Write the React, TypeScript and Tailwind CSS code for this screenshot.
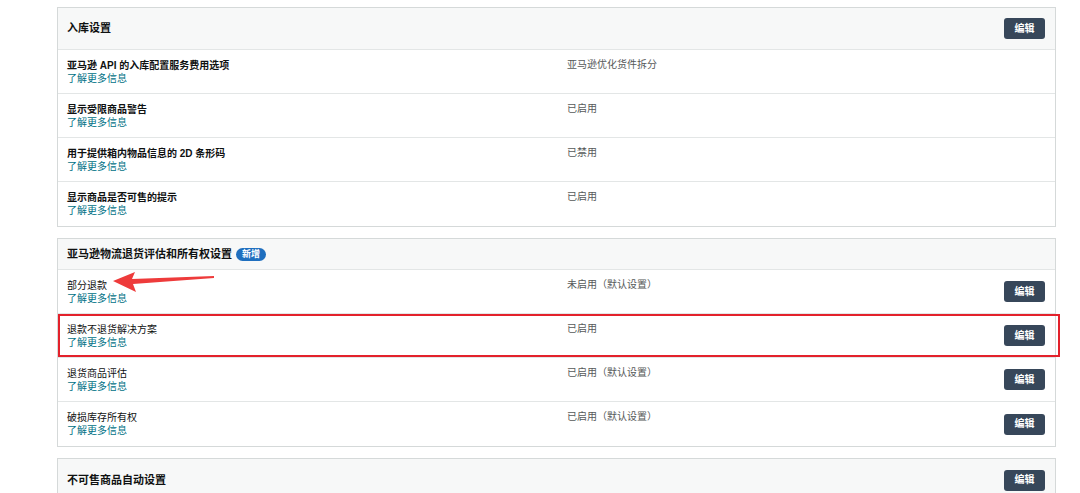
import React from "react";

const font = { fontFamily: '"Liberation Sans", "Noto Sans CJK SC", sans-serif' };

function EditBtn() {
  return (
    <button className="h-[21px] w-[41px] rounded-[3px] bg-[#37475a] text-[10px] font-bold text-white leading-none">
      编辑
    </button>
  );
}

type Row = { label: string; value: string; bold?: boolean; edit?: boolean; highlight?: boolean; arrow?: boolean };

function SettingRow({ r, last }: { r: Row; last: boolean }) {
  return (
    <div className={`relative flex h-[44px] items-center pl-[9px] pr-[10px] ${last ? "h-[43px]" : "border-b border-[#e3e6e6]"}`}>
      <div className="w-[500px]">
        <div className={`text-[10px] leading-[13px] text-[#0f1111] ${r.bold ? "font-bold" : ""}`}>{r.label}</div>
        <div className="text-[10px] leading-[13px] text-[#007185]">了解更多信息</div>
      </div>
      <div className="flex-1 self-start pt-[8px] text-[10px] leading-[13px] text-[#565959]">{r.value}</div>
      {r.edit && <EditBtn />}
      {r.highlight && (
        <div className="pointer-events-none absolute left-0 top-0 bottom-0 right-[-5px] border-2 border-[#e3212b]" />
      )}
      {r.arrow && (
        <svg className="pointer-events-none absolute left-[55px] top-[1px]" width="102" height="22" viewBox="0 0 102 22">
          <polygon points="0,10 22,1 19,8 101,5 101,7 20,13 23,21" fill="#ee3b3b" />
        </svg>
      )}
    </div>
  );
}

function Panel({
  title,
  badge,
  edit,
  rows,
  headerH,
}: {
  title: string;
  badge?: boolean;
  edit?: boolean;
  rows: Row[];
  headerH: string;
}) {
  return (
    <div className="w-[999px] border border-[#d5d9d9] bg-white">
      <div className={`flex ${headerH} items-center justify-between bg-[#f7f8f8] pl-[9px] pr-[10px] ${rows.length ? "border-b border-[#e3e6e6]" : ""}`}>
        <div className="flex items-center gap-[4px]">
          <span className="text-[11px] font-bold text-[#0f1111]">{title}</span>
          {badge && (
            <span className="rounded-full bg-[#1f6fbf] px-[6px] py-[1px] text-[9px] font-bold leading-[11px] text-white">新增</span>
          )}
        </div>
        {edit && <EditBtn />}
      </div>
      {rows.map((r, i) => (
        <SettingRow key={i} r={r} last={i === rows.length - 1} />
      ))}
    </div>
  );
}

export default function App() {
  return (
    <div className="min-h-[493px] w-[1080px] overflow-hidden bg-white pl-[57px] pt-[7px]" style={font}>
      <div className="flex flex-col gap-[11px]">
        <Panel
          title="入库设置"
          edit
          headerH="h-[42px]"
          rows={[
            { label: "亚马逊 API 的入库配置服务费用选项", value: "亚马逊优化货件拆分", bold: true },
            { label: "显示受限商品警告", value: "已启用", bold: true },
            { label: "用于提供箱内物品信息的 2D 条形码", value: "已禁用", bold: true },
            { label: "显示商品是否可售的提示", value: "已启用", bold: true },
          ]}
        />
        <Panel
          title="亚马逊物流退货评估和所有权设置"
          badge
          headerH="h-[31px]"
          rows={[
            { label: "部分退款", value: "未启用（默认设置）", edit: true, arrow: true },
            { label: "退款不退货解决方案", value: "已启用", edit: true, highlight: true },
            { label: "退货商品评估", value: "已启用（默认设置）", edit: true },
            { label: "破损库存所有权", value: "已启用（默认设置）", edit: true },
          ]}
        />
        <Panel title="不可售商品自动设置" edit headerH="h-[42px]" rows={[]} />
      </div>
    </div>
  );
}
